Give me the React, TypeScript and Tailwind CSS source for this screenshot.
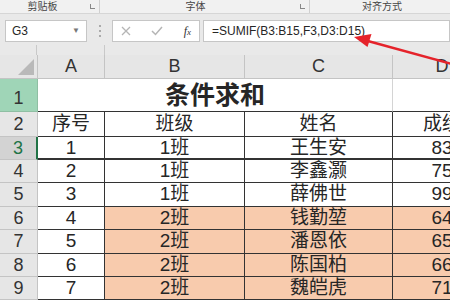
import React from 'react';

const rows = [
  { n: 3, a: '1', b: '1班', c: '王生安', d: '83', fill: false, h: 'h-[23px]' },
  { n: 4, a: '2', b: '1班', c: '李鑫灏', d: '75', fill: false, h: 'h-[23px]' },
  { n: 5, a: '3', b: '1班', c: '薛佛世', d: '99', fill: false, h: 'h-[24px]' },
  { n: 6, a: '4', b: '2班', c: '钱勤堃', d: '64', fill: true, h: 'h-[23px]' },
  { n: 7, a: '5', b: '2班', c: '潘恩依', d: '65', fill: true, h: 'h-[24px]' },
  { n: 8, a: '6', b: '2班', c: '陈国柏', d: '66', fill: true, h: 'h-[23px]' },
  { n: 9, a: '7', b: '2班', c: '魏皑虎', d: '71', fill: true, h: 'h-[23px]' },
];

const font = "font-['Liberation_Sans','Noto_Sans_CJK_SC',sans-serif]";

export default function App() {
  return (
    <div className={`relative w-[450px] h-[300px] overflow-hidden bg-[#e9e9e9] text-[#262626] ${font}`}>
      {/* ribbon group labels */}
      <div className="flex h-[14px] bg-[#f1f1f1] border-b border-[#d6d6d6] text-[10px] leading-[13px] text-[#444]">
        <div className="relative w-[100px] shrink-0 border-r border-[#d0d0d0] text-center pr-[14px]">
          剪贴板
          <span className="absolute right-[4px] top-[4px] w-[5px] h-[5px] border-l border-b border-[#888]" />
        </div>
        <div className="relative w-[210px] shrink-0 border-r border-[#d0d0d0] text-center pr-[18px]">
          字体
          <span className="absolute right-[4px] top-[4px] w-[5px] h-[5px] border-l border-b border-[#888]" />
        </div>
        <div className="flex-1 text-center pl-[4px]">对齐方式</div>
      </div>

      {/* formula bar */}
      <div className="flex items-center h-[31px] pt-[3px] pl-[5px]">
        <div className="flex shrink-0 items-center justify-between w-[82px] h-[22px] bg-white border border-[#c6c6c6] px-[6px] text-[12px]">
          <span>G3</span>
          <span className="text-[8px] text-[#777]">▼</span>
        </div>
        <div className="flex shrink-0 flex-col items-center gap-[3px] w-[25px]">
          <span className="w-[2px] h-[2px] bg-[#aaa]" />
          <span className="w-[2px] h-[2px] bg-[#aaa]" />
          <span className="w-[2px] h-[2px] bg-[#aaa]" />
        </div>
        <div className="flex shrink-0 items-center justify-between w-[88px] h-[22px] bg-white border border-[#c6c6c6] px-[8px]">
          <svg width="10" height="10" viewBox="0 0 10 10">
            <path d="M1 1 L9 9 M9 1 L1 9" stroke="#b5b5b5" strokeWidth="1.3" />
          </svg>
          <svg width="12" height="10" viewBox="0 0 12 10">
            <path d="M1 5 L4.5 8.5 L11 1" stroke="#b5b5b5" strokeWidth="1.5" fill="none" />
          </svg>
          <span className="font-['Liberation_Serif',serif] italic text-[12px] text-[#333]">
            f<span className="text-[9px]">x</span>
          </span>
        </div>
        <div className="flex-1 h-[22px] ml-[3px] bg-white border border-[#c6c6c6] pl-[8px] text-[12px] leading-[20px]">
          =SUMIF(B3:B15,F3,D3:D15)
        </div>
      </div>

      {/* strip under formula bar */}
      <div className="flex h-[10px]">
        <div className="w-[37px] shrink-0 border-r border-[#c9c9c9]" />
        <div className="w-[68px] shrink-0 border-r border-[#c9c9c9]" />
      </div>

      {/* column headers */}
      <div className="flex h-[24px] bg-[#e6e6e6] border-b border-[#c4c4c4] text-[18px] leading-[23px] text-[#333]">
        <div className="relative w-[38px] shrink-0 border-r border-[#c4c4c4]">
          <div className="absolute right-[3px] bottom-[3px] w-0 h-0 border-l-[16px] border-l-transparent border-b-[16px] border-b-[#b9b9b9]" />
        </div>
        <div className="w-[67px] shrink-0 border-r border-[#c4c4c4] text-center">A</div>
        <div className="w-[140px] shrink-0 border-r border-[#c4c4c4] text-center">B</div>
        <div className="w-[148px] shrink-0 border-r border-[#c4c4c4] text-center">C</div>
        <div className="w-[98px] shrink-0 text-center">D</div>
      </div>

      {/* row 1 */}
      <div className="flex h-[33px]">
        <div className="w-[38px] shrink-0 bg-[#9fd5b7] border-r border-b border-[#8fbfa3] text-center text-[18px] leading-[38px] text-[#333]">1</div>
        <div className="w-[355px] shrink-0 bg-white border-r border-[#d4d4d4] border-b-[1.5px] border-b-[#333] text-center text-[25px] font-bold leading-[31px] pt-[1px]">
          条件求和
        </div>
        <div className="w-[98px] shrink-0 bg-white border-b-[1.5px] border-b-[#333]" />
      </div>

      {/* row 2 */}
      <div className="flex h-[25px] text-[19px] leading-[24px]">
        <div className="w-[38px] shrink-0 bg-[#e6e6e6] border-r border-b border-[#c4c4c4] text-center text-[18px] text-[#333]">2</div>
        <div className="w-[67px] shrink-0 bg-white border-r border-b border-[#333] text-center">序号</div>
        <div className="w-[140px] shrink-0 bg-white border-r border-b border-[#333] text-center">班级</div>
        <div className="w-[148px] shrink-0 bg-white border-r border-b border-[#333] text-center">姓名</div>
        <div className="w-[98px] shrink-0 bg-white border-b border-[#333] text-center">成绩</div>
      </div>

      {rows.map((r) => {
        const cell = r.fill ? 'bg-[#f8cbad]' : 'bg-white';
        const bottom = r.n === 3 ? 'border-b-2' : 'border-b';
        return (
          <div key={r.n} className={`flex ${r.h} text-[19px] leading-[22px]`}>
            <div
              className={`w-[38px] shrink-0 border-b border-[#c4c4c4] text-center text-[18px] ${
                r.n === 3
                  ? 'bg-[#d3d3d3] text-[#217346] border-r-2 border-r-[#217346]'
                  : 'bg-[#e6e6e6] text-[#333] border-r'
              }`}
            >
              {r.n}
            </div>
            <div className={`w-[67px] shrink-0 bg-white border-r ${bottom} border-[#333] text-center`}>{r.a}</div>
            <div className={`w-[140px] shrink-0 ${cell} border-r ${bottom} border-[#333] text-center`}>{r.b}</div>
            <div className={`w-[148px] shrink-0 ${cell} border-r ${bottom} border-[#333] text-center`}>{r.c}</div>
            <div className={`w-[98px] shrink-0 ${cell} ${bottom} border-[#333] text-center`}>{r.d}</div>
          </div>
        );
      })}

      {/* red arrow */}
      <svg className="absolute left-0 top-0 pointer-events-none" width="450" height="300" viewBox="0 0 450 300">
        <line x1="452" y1="64" x2="366" y2="40.5" stroke="#e5232b" strokeWidth="2.5" />
        <polygon points="354,37 371.5,34 367.5,47" fill="#e5232b" />
      </svg>
    </div>
  );
}
